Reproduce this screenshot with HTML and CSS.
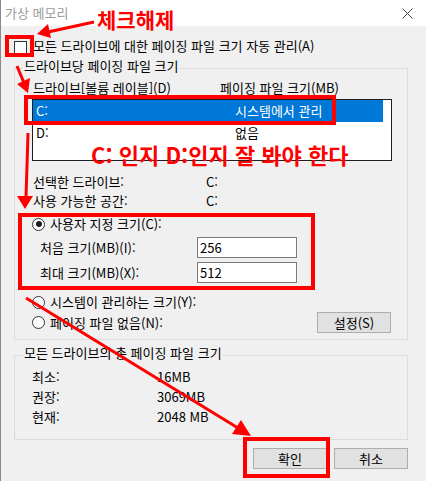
FILE: index.html
```html
<!DOCTYPE html>
<html lang="ko">
<head>
  <meta charset="UTF-8">
  <meta name="viewport" content="width=device-width, initial-scale=1.0">
  <title>가상 메모리</title>
  <link rel="stylesheet" href="styles.css">
</head>
<body>

  <div class="window">
    <div class="titlebar">
      <span class="title">가상 메모리</span>
      <svg class="close" width="11" height="11" viewBox="0 0 11 11">
        <path d="M0.5 0.5 L10.5 10.5 M10.5 0.5 L0.5 10.5" stroke="#444" stroke-width="1" fill="none"/>
      </svg>
    </div>

    <div class="content">
      <div class="check-row">
        <span class="checkbox"></span>
        <span>모든 드라이브에 대한 페이징 파일 크기 자동 관리(A)</span>
      </div>

      <div class="group group-drive">
        <div class="group-title">드라이브당 페이징 파일 크기</div>

        <div class="list-head">
          <span class="head-drive">드라이브[볼륨 레이블](D)</span>
          <span>페이징 파일 크기(MB)</span>
        </div>
        <div class="listbox">
          <div class="list-row selected">
            <span class="col-drive">C:</span>
            <span>시스템에서 관리</span>
          </div>
          <div class="list-row">
            <span class="col-drive">D:</span>
            <span>없음</span>
          </div>
        </div>

        <div class="info-row first">
          <span class="info-label">선택한 드라이브:</span>
          <span>C:</span>
        </div>
        <div class="info-row">
          <span class="info-label">사용 가능한 공간:</span>
          <span>C:</span>
        </div>

        <div class="radio-row custom">
          <span class="radio checked"></span>
          <span>사용자 지정 크기(C):</span>
        </div>
        <div class="size-row">
          <span class="size-label">처음 크기(MB)(I):</span>
          <span class="textbox">256</span>
        </div>
        <div class="size-row">
          <span class="size-label">최대 크기(MB)(X):</span>
          <span class="textbox">512</span>
        </div>

        <div class="radio-row system">
          <span class="radio"></span>
          <span>시스템이 관리하는 크기(Y):</span>
        </div>
        <div class="radio-row none">
          <span class="radio"></span>
          <span class="grow">페이징 파일 없음(N):</span>
          <button class="btn btn-set">설정(S)</button>
        </div>
      </div>

      <div class="group group-total">
        <div class="group-title">모든 드라이브의 총 페이징 파일 크기</div>
        <div class="total-row first">
          <span class="total-label">최소:</span>
          <span>16MB</span>
        </div>
        <div class="total-row">
          <span class="total-label">권장:</span>
          <span>3069MB</span>
        </div>
        <div class="total-row">
          <span class="total-label">현재:</span>
          <span>2048 MB</span>
        </div>
      </div>

      <div class="buttons">
        <button class="btn">확인</button>
        <button class="btn">취소</button>
      </div>
    </div>

    <!-- 빨간 표시 -->
    <svg class="marks" width="426" height="481" viewBox="0 0 426 481">
      <g fill="none" stroke="#ff0000" stroke-width="4">
        <rect x="7" y="37" width="25" height="18"/>
        <rect x="26" y="97" width="308" height="26"/>
        <rect x="20" y="215" width="293" height="73"/>
        <rect x="245" y="439" width="83" height="37"/>
      </g>
      <g stroke="#ff0000" stroke-width="3">
        <line x1="94" y1="22" x2="48" y2="32"/>
        <line x1="17" y1="66" x2="24" y2="83"/>
        <line x1="28" y1="133" x2="26" y2="198"/>
        <line x1="26" y1="298" x2="238" y2="428"/>
      </g>
      <g fill="#ff0000">
        <polygon points="37,34 51,38 48,24"/>
        <polygon points="28,93 30,78 17,84"/>
        <polygon points="25,209 17,196 33,196"/>
        <polygon points="251,436 241,420 232,434"/>
      </g>
    </svg>
    <div class="note note-check">체크해제</div>
    <div class="note note-drive">C: 인지 D:인지 잘 봐야 한다</div>
  </div>

</body>
</html>
```

FILE: styles.css
```css
* {
  box-sizing: border-box;
}

body {
  margin: 0;
  font-family: "Noto Sans CJK KR", "Noto Sans", sans-serif;
  font-size: 13px;
  color: #000;
  background: #f0f0f0;
}

.window {
  position: relative;
  width: 426px;
  height: 481px;
  background: #f0f0f0;
  border-left: 1px solid #8a8a8a;
  overflow: hidden;
}

.titlebar {
  height: 26px;
  background: #fff;
  padding: 0 13px 0 4px;
  display: flex;
  align-items: center;
  justify-content: space-between;
}

.title {
  color: #9a9a9a;
  line-height: 16px;
}

.close {
  margin-top: 1px;
}

.content {
  padding: 10px 0 0 13px;
}

.check-row {
  display: flex;
  align-items: center;
  gap: 6px;
  height: 20px;
  line-height: 16px;
}

.checkbox {
  width: 13px;
  height: 13px;
  border: 1px solid #333;
  background: #fff;
  margin-top: 2px;
}

/* 그룹 상자 */
.group {
  width: 394px;
  border: 1px solid #dcdcdc;
  padding: 0 15px 0 17px;
}

.group-title {
  width: fit-content;
  margin: -11px 0 0 -9px;
  padding: 0 1px;
  line-height: 16px;
  background: #f0f0f0;
}

.group-drive {
  margin-top: 12px;
  padding-bottom: 6px;
}

.list-head {
  display: flex;
  margin-top: 6px;
  line-height: 16px;
}

.head-drive {
  width: 188px;
  padding-left: 1px;
}

.listbox {
  width: 360px;
  height: 62px;
  margin-top: 3px;
  border: 1px solid #1e1e1e;
  background: #fff;
}

.list-row {
  display: flex;
  align-items: center;
  width: 350px;
  height: 22px;
  line-height: 16px;
}

.list-row.selected {
  background: #0078d7;
  color: #fff;
}

.col-drive {
  width: 202px;
  padding-left: 3px;
}

.info-row {
  display: flex;
  line-height: 19px;
}

.info-row.first {
  margin-top: 11px;
}

.info-label {
  width: 174px;
  padding-left: 1px;
}

.radio-row {
  display: flex;
  align-items: center;
  gap: 5px;
  height: 18px;
  line-height: 16px;
}

.radio-row.custom {
  margin-top: 5px;
}

.radio-row.system {
  margin-top: 10px;
}

.radio-row.none {
  height: 21px;
  margin-top: 1px;
}

.grow {
  flex: 1;
}

.radio {
  position: relative;
  width: 13px;
  height: 13px;
  border: 1px solid #333;
  border-radius: 50%;
  background: #fff;
  flex: none;
}

.radio.checked::after {
  content: "";
  position: absolute;
  left: 2.5px;
  top: 2.5px;
  width: 6px;
  height: 6px;
  border-radius: 50%;
  background: #1e1e1e;
}

.size-row {
  display: flex;
  align-items: center;
  height: 21px;
  margin-top: 4px;
  line-height: 16px;
}

.size-label {
  width: 165px;
  padding-left: 8px;
}

.textbox {
  width: 100px;
  height: 21px;
  line-height: 19px;
  padding-left: 2px;
  border: 1px solid #7a7a7a;
  background: #fff;
}

.btn {
  width: 74px;
  height: 21px;
  padding: 0;
  font-family: inherit;
  font-size: 13px;
  line-height: 16px;
  color: #000;
  background: #e1e1e1;
  border: 1px solid #adadad;
}

.btn-set {
  margin-right: 1px;
}

.group-total {
  margin-top: 15px;
  padding-bottom: 12px;
}

.total-row {
  display: flex;
  line-height: 20px;
}

.total-row.first {
  margin-top: 6px;
}

.total-label {
  width: 125px;
}

.buttons {
  width: 394px;
  margin-top: 8px;
  display: flex;
  justify-content: flex-end;
  gap: 7px;
}

/* 빨간 주석 */
.marks {
  position: absolute;
  left: -1px;
  top: 0;
  pointer-events: none;
}

.note {
  position: absolute;
  color: #ff0000;
  font-weight: bold;
  white-space: nowrap;
}

.note-check {
  left: 96px;
  top: 7px;
  font-size: 21px;
  line-height: 24px;
}

.note-drive {
  left: 90px;
  top: 144px;
  font-size: 22px;
  line-height: 20px;
}
```
